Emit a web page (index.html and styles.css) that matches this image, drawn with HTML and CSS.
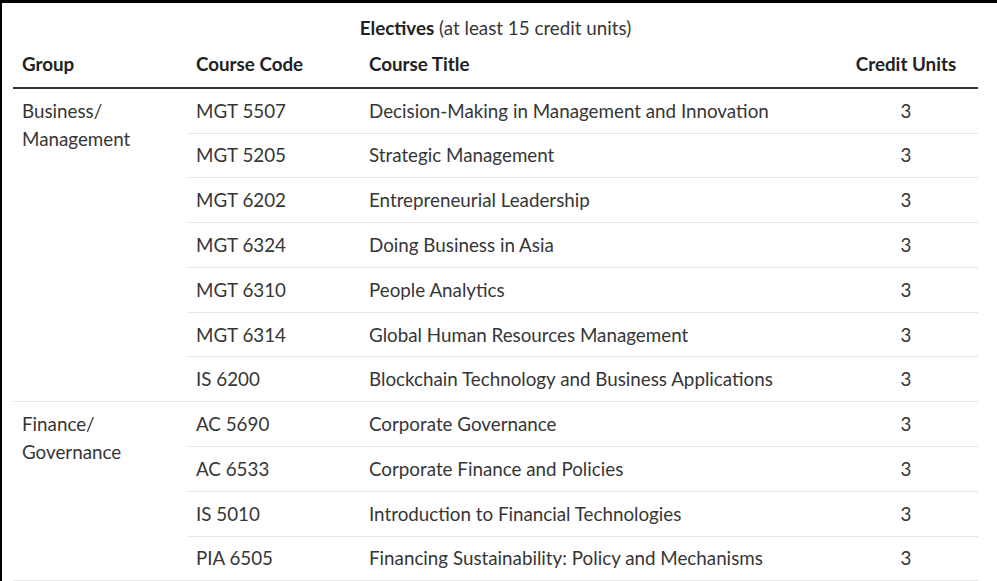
FILE: index.html
```html
<!DOCTYPE html>
<html>
<head>
<meta charset="utf-8">
<link rel="stylesheet" href="styles.css">
</head>
<body>
<div class="frame">
<table class="courses">
  <caption><strong>Electives</strong> (at least 15 credit units)</caption>
  <thead>
    <tr><th class="c-group">Group</th><th class="c-code">Course Code</th><th class="c-title">Course Title</th><th class="c-cu">Credit Units</th></tr>
  </thead>
  <tbody>
    <tr class="group-start"><td class="group" rowspan="7">Business/<br>Management</td><td>MGT 5507</td><td>Decision-Making in Management and Innovation</td><td class="cu">3</td></tr>
    <tr><td>MGT 5205</td><td>Strategic Management</td><td class="cu">3</td></tr>
    <tr><td>MGT 6202</td><td>Entrepreneurial Leadership</td><td class="cu">3</td></tr>
    <tr><td>MGT 6324</td><td>Doing Business in Asia</td><td class="cu">3</td></tr>
    <tr><td>MGT 6310</td><td>People Analytics</td><td class="cu">3</td></tr>
    <tr><td>MGT 6314</td><td>Global Human Resources Management</td><td class="cu">3</td></tr>
    <tr><td>IS 6200</td><td>Blockchain Technology and Business Applications</td><td class="cu">3</td></tr>
    <tr class="group-start"><td class="group" rowspan="4">Finance/<br>Governance</td><td>AC 5690</td><td>Corporate Governance</td><td class="cu">3</td></tr>
    <tr><td>AC 6533</td><td>Corporate Finance and Policies</td><td class="cu">3</td></tr>
    <tr><td>IS 5010</td><td>Introduction to Financial Technologies</td><td class="cu">3</td></tr>
    <tr><td>PIA 6505</td><td>Financing Sustainability: Policy and Mechanisms</td><td class="cu">3</td></tr>
  </tbody>
</table>
</div>
</body>
</html>
```
FILE: styles.css
```css
html, body {
  margin: 0;
  padding: 0;
  background: #fff;
}
body {
  font-family: Lato, "Open Sans", sans-serif;
  color: #363636;
  font-size: 18.8px;
}
.frame {
  border-top: 3px solid #000;
  border-left: 2px solid #000;
  height: 578px;
  padding-left: 11px;
  overflow: hidden;
}
.courses {
  width: 965px;
  border-collapse: collapse;
  table-layout: fixed;
}
.courses caption {
  padding-top: 11px;
  line-height: 28px;
  text-align: center;
  color: #363636;
}
.courses caption strong {
  font-weight: 700;
  color: #222;
}
.courses th,
.courses td {
  box-sizing: border-box;
  text-align: left;
  vertical-align: top;
  padding: 7.9px 9px;
  line-height: 28px;
  white-space: nowrap;
}
.courses th {
  font-weight: 700;
  color: #222;
  padding-bottom: 8.9px;
  border-bottom: 2px solid #333;
}
.c-group { width: 174px; }
.c-code { width: 173px; }
.c-title { width: 474px; }
.courses th.c-cu,
.courses td.cu {
  text-align: center;
}
.courses td {
  border-bottom: 1px solid #e6e6e6;
}
```
